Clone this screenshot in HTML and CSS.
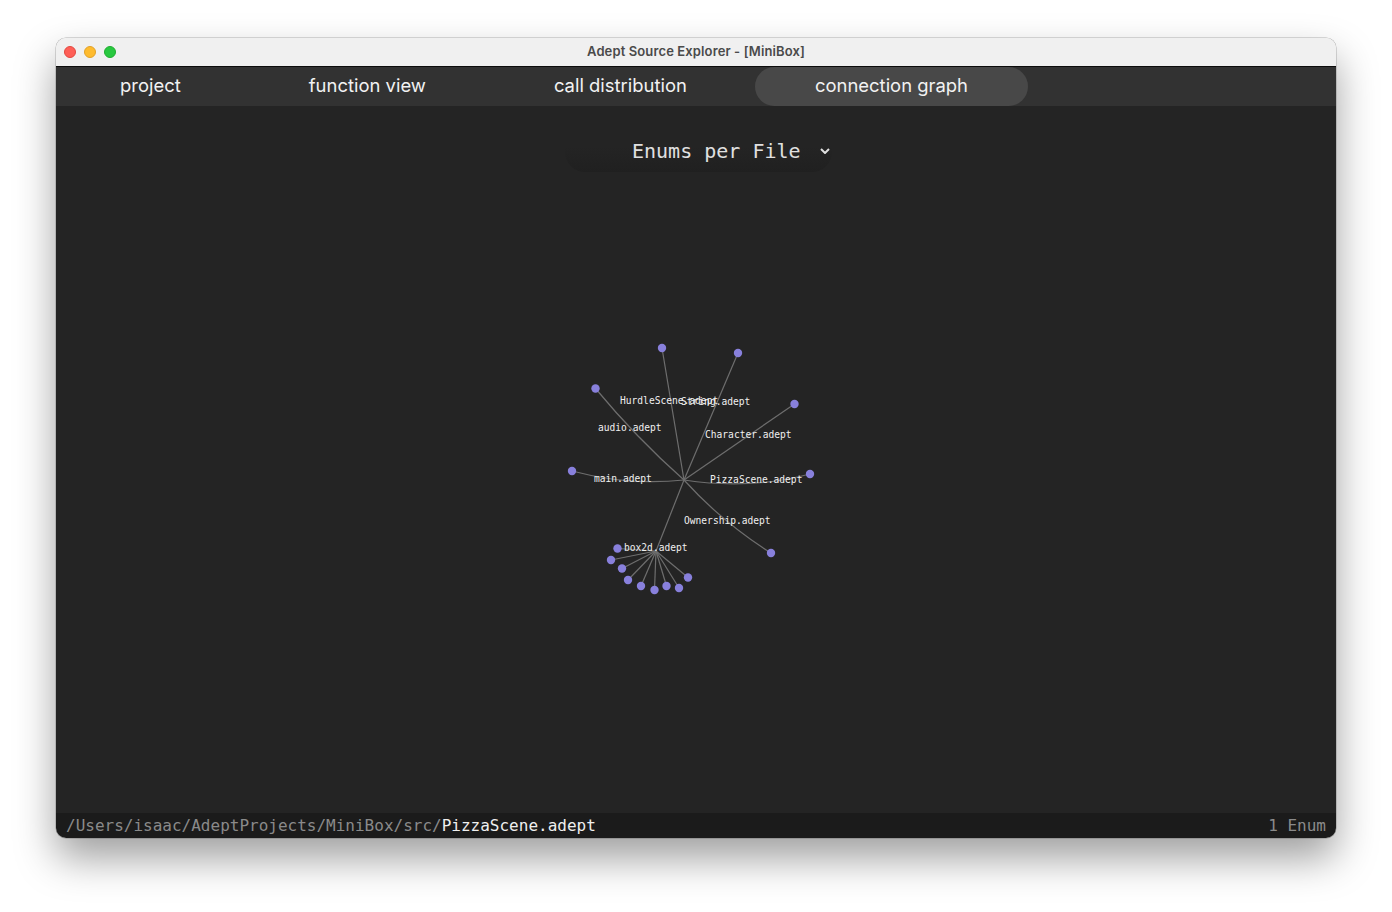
FILE: index.html
```html
<!doctype html>
<html lang="en">
  <head>
    <title>Adept Source Explorer - [MiniBox]</title>
    <meta charset="utf-8" />
    <link rel="stylesheet" href="styles.css">
  </head>
  <body>
    <div class="window">
      <div class="titlebar">
        <div class="lights">
          <span class="light red"></span>
          <span class="light yellow"></span>
          <span class="light green"></span>
        </div>
        <div class="title">Adept Source Explorer - [MiniBox]</div>
      </div>
      <div class="tabs">
        <div class="tab">project</div>
        <div class="tab">function view</div>
        <div class="tab">call distribution</div>
        <div class="tab active">connection graph</div>
      </div>
      <div class="main">
        <div class="dropdown">
          <span class="dropdown-label">Enums per File</span>
          <svg class="chevron" width="10" height="6" viewBox="0 0 10 6"><path d="M1 1l4 4 4-4" /></svg>
        </div>
        <!-- viewBox uses screen coordinates, so nodes are easy to place -->
        <svg class="graph" viewBox="56 172 1280 641">
          <g class="edges">
            <path d="M684 480L662 348" />
            <path d="M684 480L738 353" />
            <path d="M684 480L794.5 404" />
            <path d="M684 480Q750 490 810 474" />
            <path d="M684 480Q722.5 522.5 771 553" />
            <path d="M684 480Q636 437.5 595.5 388.5" />
            <path d="M684 480Q628 486 572 471" />
            <path d="M684 480L656 551" />
            <path d="M656 551L617.5 548.5" />
            <path d="M656 551L611 560" />
            <path d="M656 551L622 568.5" />
            <path d="M656 551L628 580" />
            <path d="M656 551L641 586" />
            <path d="M656 551L654.5 590" />
            <path d="M656 551L666.5 586" />
            <path d="M656 551L679 588" />
            <path d="M656 551L688 577.5" />
          </g>
          <g class="nodes">
            <circle cx="662" cy="348" r="4.2" />
            <circle cx="738" cy="353" r="4.2" />
            <circle cx="794.5" cy="404" r="4.2" />
            <circle cx="810" cy="474" r="4.2" />
            <circle cx="771" cy="553" r="4.2" />
            <circle cx="595.5" cy="388.5" r="4.2" />
            <circle cx="572" cy="471" r="4.2" />
            <circle cx="617.5" cy="548.5" r="4.2" />
            <circle cx="611" cy="560" r="4.2" />
            <circle cx="622" cy="568.5" r="4.2" />
            <circle cx="628" cy="580" r="4.2" />
            <circle cx="641" cy="586" r="4.2" />
            <circle cx="654.5" cy="590" r="4.2" />
            <circle cx="666.5" cy="586" r="4.2" />
            <circle cx="679" cy="588" r="4.2" />
            <circle cx="688" cy="577.5" r="4.2" />
          </g>
          <g class="labels">
            <text x="620" y="404">HurdleScene.adept</text>
            <text x="681" y="405">String.adept</text>
            <text x="598" y="431">audio.adept</text>
            <text x="705" y="438">Character.adept</text>
            <text x="594" y="482">main.adept</text>
            <text x="710" y="483">PizzaScene.adept</text>
            <text x="684" y="524">Ownership.adept</text>
            <text x="624" y="551">box2d.adept</text>
          </g>
        </svg>
      </div>
      <div class="statusbar">
        <div class="path">/Users/isaac/AdeptProjects/MiniBox/src/<span class="filename">PizzaScene.adept</span></div>
        <div class="count">1 Enum</div>
      </div>
    </div>
  </body>
</html>
```

FILE: styles.css
```css
/* Set CSS for whole page */
html, body{
  height: 100%;
  overflow: hidden;
}
body{
  margin: 0;
  padding: 38px 56px 0;
  box-sizing: border-box;
  background-color: #fff;
}
/* Window frame */
.window{
  height: 800px;
  display: flex;
  flex-direction: column;
  border-radius: 10px;
  overflow: hidden;
  box-shadow: 0 0 0 0.5px rgba(0,0,0,.28), 0 20px 40px rgba(0,0,0,.38);
}
.titlebar{
  height: 28px;
  flex: none;
  display: flex;
  align-items: center;
  justify-content: center;
  position: relative;
  background-color: #f0f0f0;
  border-bottom: 1px solid #0c0c0c;
}
.lights{
  position: absolute;
  left: 8px;
  top: 8px;
  display: flex;
  gap: 8px;
}
.light{
  width: 12px;
  height: 12px;
  border-radius: 50%;
  box-sizing: border-box;
}
.red{
  background-color: #fe5f57;
  border: 1px solid #e2483f;
}
.yellow{
  background-color: #febb2e;
  border: 1px solid #e1a127;
}
.green{
  background-color: #28c840;
  border: 1px solid #1fad2f;
}
.title{
  font-family: Inter, sans-serif;
  font-size: 13px;
  font-weight: 600;
  letter-spacing: .12px;
  color: #4a4a4a;
  margin-bottom: 2px;
}
/* Tabs */
.tabs{
  height: 39px;
  flex: none;
  display: flex;
  gap: 8px;
  padding-left: 4px;
  background-color: #323232;
}
.tab{
  padding: 0 60px 3px;
  display: flex;
  align-items: center;
  border-radius: 20px;
  font-family: Inter, sans-serif;
  font-size: 18.45px;
  color: #f2f2f2;
}
.tab.active{
  background-color: #484848;
}
/* Main area */
.main{
  flex: 1;
  min-height: 0;
  display: flex;
  flex-direction: column;
  background-color: #242424;
}
.dropdown{
  width: 267px;
  height: 42px;
  box-sizing: border-box;
  margin: 24px 0 0 509px;
  padding-left: 67px;
  flex: none;
  display: flex;
  align-items: center;
  gap: 19px;
  border-radius: 20px;
  background: linear-gradient(#242424 40%, #202020);
  font-family: "DejaVu Sans Mono", monospace;
  font-size: 20px;
  color: #e0e0e0;
}
.dropdown-label{
  white-space: nowrap;
}
.chevron{
  fill: none;
  stroke: #e0e0e0;
  stroke-width: 2;
}
.graph{
  flex: 1;
  min-height: 0;
  width: 100%;
  display: block;
}
.edges path{
  fill: none;
  stroke: #6e6e6e;
  stroke-width: 1.2;
}
.nodes circle{
  fill: #8880dc;
}
.labels text{
  font-family: "DejaVu Sans Mono", monospace;
  font-size: 9.6px;
  fill: #f0f0f0;
}
/* Status bar */
.statusbar{
  height: 25px;
  flex: none;
  display: flex;
  align-items: center;
  justify-content: space-between;
  padding: 0 10px;
  background-color: #1b1b1b;
  font-family: "DejaVu Sans Mono", monospace;
  font-size: 16px;
  color: #8a8a8a;
}
.filename{
  color: #efefef;
}
```
